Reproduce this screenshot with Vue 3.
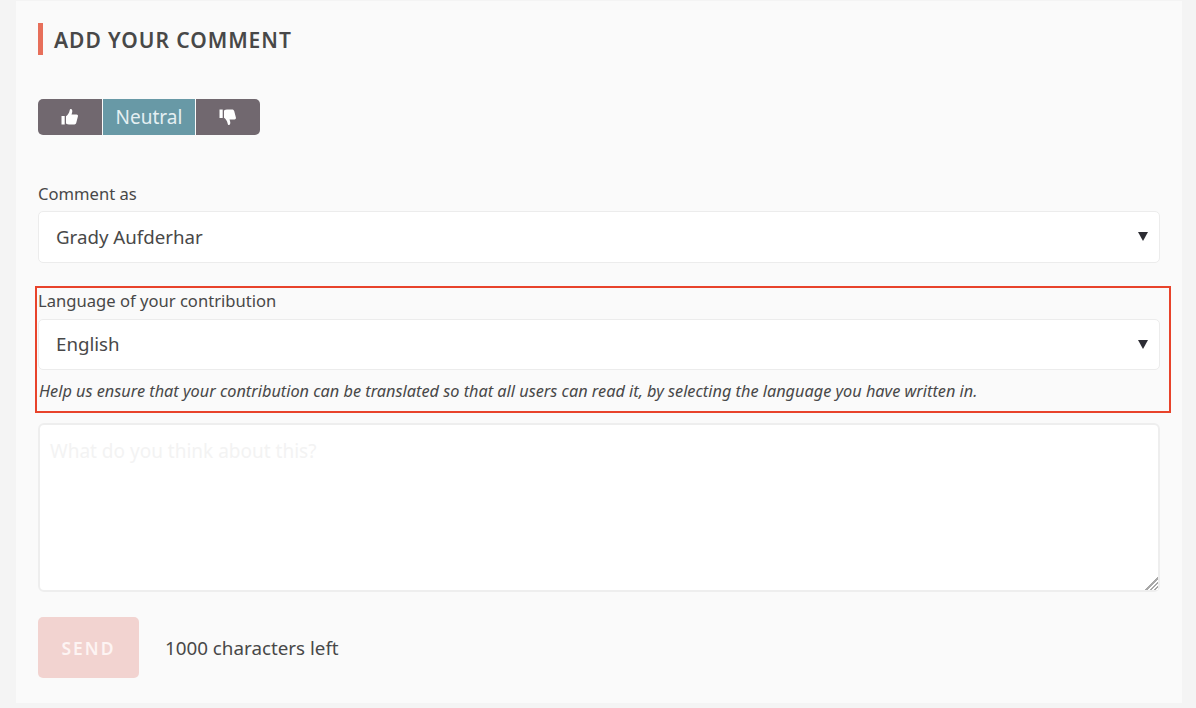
<template>
  <div class="page">
    <form class="card" @submit.prevent>
      <h2 class="title">ADD YOUR COMMENT</h2>

      <div class="votes">
        <button type="button" class="vote vote-left" aria-label="Agree">
          <svg viewBox="0 0 18 18" width="18" height="18" fill="#fff">
            <path d="M0.5 8h3.2v8.5H0.5z" />
            <path d="M5 8.2c1.8-1.3 3.2-3.3 3.7-6 .2-.9.7-1.4 1.4-1.2 1.300.4 1.500 2.200.9 4.100l-.5 1.500h5c1.100 0 1.700.8 1.400 1.800l-1.700 6.700c-.2.9-.9 1.400-1.800 1.400H8c-1.100 0-2-.3-3-.9z" />
          </svg>
        </button>
        <button type="button" class="vote vote-neutral">Neutral</button>
        <button type="button" class="vote vote-right" aria-label="Disagree">
          <svg viewBox="0 0 18 18" width="18" height="18" fill="#fff">
            <path d="M0.500 1.500h3.200V10H0.500z" />
            <path d="M5 9.800c1.800 1.300 3.200 3.300 3.700 6 .2.900.7 1.400 1.400 1.200 1.300-.4 1.500-2.200.9-4.100l-.5-1.500h5c1.100 0 1.700-.8 1.400-1.800l-1.700-6.700C14.600 2 13.900 1.500 13 1.500H8c-1.100 0-2 .3-3 .9z" />
          </svg>
        </button>
      </div>

      <label class="label">Comment as</label>
      <div class="select-wrap">
        <select class="select">
          <option>Grady Aufderhar</option>
        </select>
        <span class="arrow"></span>
      </div>

      <div class="highlight">
        <label class="label">Language of your contribution</label>
        <div class="select-wrap">
          <select class="select">
            <option>English</option>
          </select>
          <span class="arrow"></span>
        </div>
        <p class="help">Help us ensure that your contribution can be translated so that all users can read it, by selecting the language you have written in.</p>
      </div>

      <textarea class="textarea" placeholder="What do you think about this?"></textarea>

      <div class="actions">
        <button type="submit" class="send" disabled>SEND</button>
        <span class="left">1000 characters left</span>
      </div>
    </form>
  </div>
</template>

<script setup>
</script>

<style>
html,
body {
  margin: 0;
  background: #f4f4f4;
}
</style>

<style scoped>
.page {
  height: 708px;
  padding: 1px 14px 5px 16px;
  box-sizing: border-box;
  background: #f4f4f4;
  font-family: "Noto Sans", "Open Sans", sans-serif;
  color: #484848;
  overflow: hidden;
}

.card {
  height: 100%;
  box-sizing: border-box;
  padding: 22px 21px 0 22px;
  background: #fafafa;
}

.title {
  margin: 0;
  height: 32px;
  padding-left: 11px;
  border-left: 5px solid #e76f5a;
  font-size: 21px;
  line-height: 34px;
  font-weight: 600;
  letter-spacing: 0.95px;
  color: #484848;
}

.votes {
  display: flex;
  gap: 1px;
  margin-top: 44px;
  height: 36px;
}

.vote {
  display: flex;
  align-items: center;
  justify-content: center;
  height: 36px;
  width: 64px;
  padding: 0;
  border: 0;
  background: #71686f;
  color: #fff;
  font-family: inherit;
}

.vote-left {
  border-radius: 5px 0 0 5px;
}

.vote-right {
  border-radius: 0 5px 5px 0;
}

.vote-neutral {
  width: 92px;
  background: #6899a6;
  color: #e4eff2;
  font-size: 19px;
}

.label {
  display: block;
  font-size: 16.600px;
  line-height: 22px;
  color: #484848;
}

.votes + .label {
  margin-top: 48px;
  margin-bottom: 6px;
}

.select-wrap {
  position: relative;
  width: 1122px;
}

.select {
  display: block;
  width: 100%;
  height: 52px;
  box-sizing: border-box;
  padding: 0 40px 2px 17px;
  border: 1px solid #ececec;
  border-radius: 5px;
  background: #fff;
  font-family: inherit;
  font-size: 18.700px;
  color: #484848;
  appearance: none;
}

.arrow {
  position: absolute;
  top: 21px;
  right: 12px;
  border-left: 5.500px solid transparent;
  border-right: 5.500px solid transparent;
  border-top: 9px solid #2c2c33;
  pointer-events: none;
}

.highlight {
  margin: 23px -10px 0 -3px;
  height: 127px;
  box-sizing: border-box;
  padding: 2px 8px 0 1px;
  border: 2px solid #e8432b;
}

.highlight .label {
  margin-bottom: 7px;
}

.highlight .select {
  height: 51px;
}

.help {
  margin: 9px 0 0 1px;
  font-size: 16.300px;
  line-height: 24px;
  font-style: italic;
  color: #484848;
  white-space: nowrap;
}

.textarea {
  display: block;
  width: 1122px;
  height: 169px;
  margin-top: 10px;
  box-sizing: border-box;
  padding: 14px 10px;
  border: 2px solid #eee;
  border-radius: 6px;
  background: #fff;
  font-family: inherit;
  font-size: 19px;
  line-height: 24px;
  outline: none;
}

.textarea::placeholder {
  color: #f3f3f3;
}

.textarea::-webkit-resizer {
  background:
    linear-gradient(135deg, #fff 50%, transparent 50%),
    repeating-linear-gradient(135deg, #a8a8a8 0 1.500px, #fff 1.500px 3px);
}

.actions {
  display: flex;
  align-items: center;
  gap: 26px;
  margin-top: 25px;
}

.send {
  width: 101px;
  height: 61px;
  padding: 0;
  border: 0;
  border-radius: 5px;
  background: #f2d3d0;
  color: #fdf4f3;
  font-family: inherit;
  font-size: 17.500px;
  font-weight: 600;
  letter-spacing: 2px;
}

.left {
  font-size: 18.800px;
  color: #484848;
}
</style>
